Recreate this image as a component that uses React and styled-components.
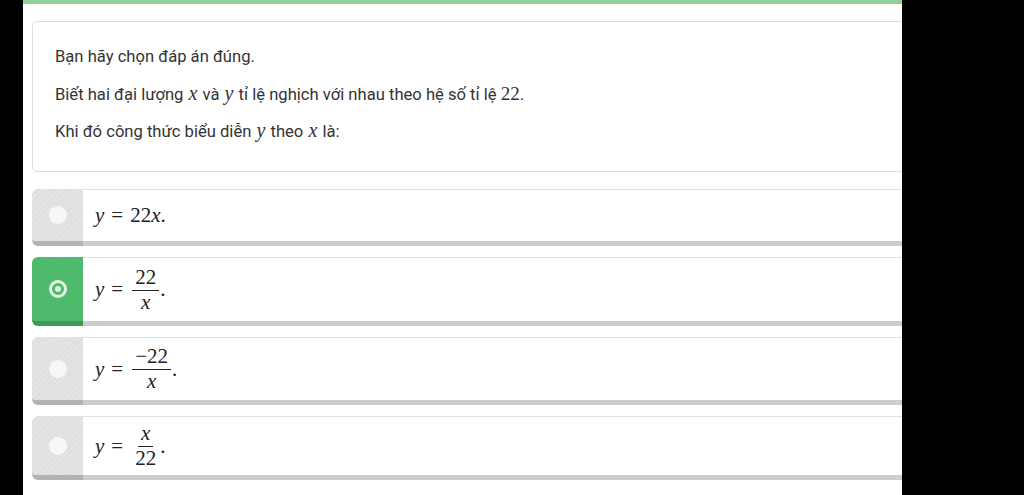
import React from "react";
import styled, { createGlobalStyle, css } from "styled-components";

const Global = createGlobalStyle`
  html, body { margin: 0; padding: 0; background: #000; }
  body { font-family: Roboto, "Liberation Sans", Arial, sans-serif; }
`;

const Page = styled.div`
  margin-left: 23px;
  width: 879px;
  height: 495px;
  background: #fff;
  border-top: 4px solid #8fd09a;
  box-sizing: border-box;
  overflow: hidden;
  padding: 17px 0 0 9px;
`;

const Column = styled.div`
  width: 900px;
  display: flex;
  flex-direction: column;
`;

const QuestionBox = styled.div`
  height: 151px;
  box-sizing: border-box;
  border: 1px solid #dcdcdc;
  border-radius: 5px;
  padding: 23px 0 0 22px;
  color: #333;
  font-size: 16.6px;
  display: flex;
  flex-direction: column;
  gap: 14px;
`;

const Line = styled.div`
  height: 23px;
  line-height: 23px;
  white-space: nowrap;
`;

const MathVar = styled.span`
  font-family: "Liberation Serif", "Times New Roman", serif;
  font-style: italic;
  font-size: 20px;
  padding: 0 1px;
`;

const MathNum = styled.span`
  font-family: "Liberation Serif", "Times New Roman", serif;
  font-size: 19px;
`;

const Options = styled.div`
  margin-top: 17px;
  display: flex;
  flex-direction: column;
  gap: 11px;
`;

const Option = styled.div`
  display: flex;
  align-items: stretch;
`;

const Marker = styled.div`
  width: 51px;
  flex: none;
  border-radius: 6px 0 0 6px;
  display: flex;
  align-items: center;
  justify-content: center;
  ${(p) =>
    p.$selected
      ? css`
          background: repeating-linear-gradient(135deg, #4db96b 0 2px, #51bc6e 2px 4px);
          border-bottom: 5px solid #3b9a55;
        `
      : css`
          background: repeating-linear-gradient(135deg, #dedfe0 0 2px, #e3e4e5 2px 4px);
          border-bottom: 5px solid #b3b3b3;
        `}
`;

const Radio = styled.span`
  width: 18px;
  height: 18px;
  border-radius: 50%;
  box-sizing: border-box;
  display: flex;
  align-items: center;
  justify-content: center;
  ${(p) =>
    p.$selected
      ? css`
          border: 3px solid #e4f4e7;
          background: #4db96b;
          &::after {
            content: "";
            width: 6px;
            height: 6px;
            border-radius: 50%;
            background: #e4f4e7;
          }
        `
      : css`
          background: #f7f7f7;
        `}
`;

const Body = styled.div`
  flex: 1;
  background: #fff;
  border-top: 1px solid #e2e2e2;
  border-bottom: 5px solid #cdcdcd;
  padding: 0 0 0 12px;
  display: flex;
  align-items: center;
  height: ${(p) => p.$h}px;
  box-sizing: border-box;
`;

const Formula = styled.span`
  display: inline-flex;
  align-items: center;
  font-family: "Liberation Serif", "Times New Roman", serif;
  font-size: 21px;
  color: #222;
`;

const I = styled.i`
  font-style: italic;
`;

const Rel = styled.span`
  margin: 0 7px;
`;

const Frac = styled.span`
  display: inline-flex;
  flex-direction: column;
  align-items: center;
  margin: 0 1px 0 2px;
`;

const Num = styled.span`
  line-height: 21px;
  padding: 0 3px 2px;
  border-bottom: 1px solid #222;
`;

const Den = styled.span`
  line-height: 21px;
  padding: 1px 3px 0;
`;

const Dot = styled.span`
  align-self: center;
`;

const options = [
  { key: 1, h: 57, f: <><I>y</I><Rel>=</Rel>22<I>x</I>.</> },
  {
    key: 2,
    h: 69,
    selected: true,
    f: <><I>y</I><Rel>=</Rel><Frac><Num>22</Num><Den><I>x</I></Den></Frac><Dot>.</Dot></>,
  },
  {
    key: 3,
    h: 68,
    f: <><I>y</I><Rel>=</Rel><Frac><Num>−22</Num><Den><I>x</I></Den></Frac><Dot>.</Dot></>,
  },
  {
    key: 4,
    h: 64,
    f: <><I>y</I><Rel>=</Rel><Frac><Num><I>x</I></Num><Den>22</Den></Frac><Dot>.</Dot></>,
  },
];

export default function App() {
  return (
    <>
      <Global />
      <Page>
        <Column>
          <QuestionBox>
            <Line>Bạn hãy chọn đáp án đúng.</Line>
            <Line>
              Biết hai đại lượng <MathVar>x</MathVar> và <MathVar>y</MathVar> tỉ lệ nghịch với nhau theo hệ số tỉ lệ <MathNum>22</MathNum>.
            </Line>
            <Line>
              Khi đó công thức biểu diễn <MathVar>y</MathVar> theo <MathVar>x</MathVar> là:
            </Line>
          </QuestionBox>
          <Options>
            {options.map((o) => (
              <Option key={o.key}>
                <Marker $selected={o.selected}>
                  <Radio $selected={o.selected} />
                </Marker>
                <Body $h={o.h}>
                  <Formula>{o.f}</Formula>
                </Body>
              </Option>
            ))}
          </Options>
        </Column>
      </Page>
    </>
  );
}
